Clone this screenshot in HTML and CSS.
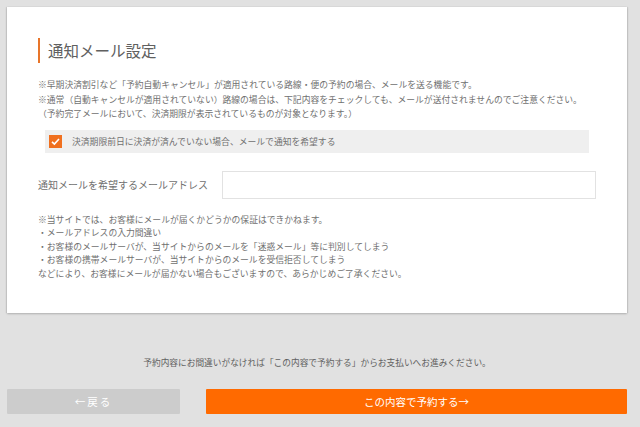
FILE: index.html
```html
<!DOCTYPE html>
<html lang="ja">
<head>
<meta charset="utf-8">
<link rel="stylesheet" href="styles.css">
</head>
<body>
<div class="wrap">
  <section class="card">
    <h2 class="title">通知メール設定</h2>
    <div class="notes">
      <p>※早期決済割引など「予約自動キャンセル」が適用されている路線・便の予約の場合、メールを送る機能です。</p>
      <p>※通常（自動キャンセルが適用されていない）路線の場合は、下記内容をチェックしても、メールが送付されませんのでご注意ください。</p>
      <p>（予約完了メールにおいて、決済期限が表示されているものが対象となります。）</p>
    </div>
    <label class="check-row">
      <span class="check-box"><svg width="13" height="13" viewBox="0 0 13 13"><path d="M3 6.8 L5.4 9.1 L10 4" fill="none" stroke="#fff" stroke-width="1.6"/></svg></span>
      <span class="check-label">決済期限前日に決済が済んでいない場合、メールで通知を希望する</span>
    </label>
    <div class="field-row">
      <span class="field-label">通知メールを希望するメールアドレス</span>
      <span class="field-input"></span>
    </div>
    <div class="notes notes2">
      <p>※当サイトでは、お客様にメールが届くかどうかの保証はできかねます。</p>
      <p>・メールアドレスの入力間違い</p>
      <p>・お客様のメールサーバが、当サイトからのメールを「迷惑メール」等に判別してしまう</p>
      <p>・お客様の携帯メールサーバが、当サイトからのメールを受信拒否してしまう</p>
      <p>などにより、お客様にメールが届かない場合もございますので、あらかじめご了承ください。</p>
    </div>
  </section>
  <p class="confirm">予約内容にお間違いがなければ「この内容で予約する」からお支払いへお進みください。</p>
  <div class="buttons">
    <a class="btn btn-back">←戻る</a>
    <a class="btn btn-go">この内容で予約する→</a>
  </div>
</div>
</body>
</html>
```
FILE: styles.css
```css
html, body {
  margin: 0;
  padding: 0;
  background: #e1e1e1;
  font-family: "Noto Sans CJK JP", "Noto Sans", sans-serif;
  color: #707070;
}
.wrap {
  margin-left: 7px;
  width: 620px;
  padding-top: 7px;
}
.card {
  background: #fff;
  height: 306px;
  box-sizing: border-box;
  padding: 31px 0 0 31px;
  box-shadow: 0 1px 2px rgba(0,0,0,0.2), -1px 0 1px rgba(0,0,0,0.08), 1px 0 1px rgba(0,0,0,0.08);
}
.title {
  margin: 0;
  height: 25px;
  line-height: 25px;
  border-left: 2px solid #e8752a;
  padding-left: 8px;
  font-size: 15.5px;
  font-weight: normal;
  color: #606060;
}
.notes {
  margin-top: 15px;
  font-size: 8.8px;
  line-height: 14.5px;
}
.notes p { margin: 0; white-space: nowrap; }
.check-row {
  display: flex;
  align-items: center;
  margin: 8px 0 0 7px;
  width: 544px;
  height: 23px;
  background: #efefef;
  padding-left: 4px;
  box-sizing: border-box;
}
.check-box {
  width: 13px;
  height: 13px;
  background: #f0701f;
  display: flex;
}
.check-label {
  margin-left: 10px;
  font-size: 8.8px;
}
.field-row {
  display: flex;
  align-items: center;
  margin-top: 18px;
  height: 28px;
}
.field-label {
  font-size: 10px;
  width: 184px;
}
.field-input {
  width: 374px;
  height: 28px;
  box-sizing: border-box;
  border: 1px solid #e2e2e2;
  background: #fff;
}
.notes2 {
  margin-top: 14px;
  line-height: 13.5px;
}
.confirm {
  margin: 43px 0 0;
  text-align: center;
  font-size: 8.7px;
  line-height: 14px;
  color: #606060;
}
.buttons {
  display: flex;
  gap: 26px;
  margin-top: 19px;
}
.btn {
  height: 25px;
  line-height: 25px;
  text-align: center;
  color: #fff;
  font-size: 10.5px;
  border-radius: 1px;
}
.btn-back {
  width: 173px;
  background: #cccccc;
  letter-spacing: 2px;
}
.btn-go {
  width: 421px;
  background: #ff6a00;
}
```
